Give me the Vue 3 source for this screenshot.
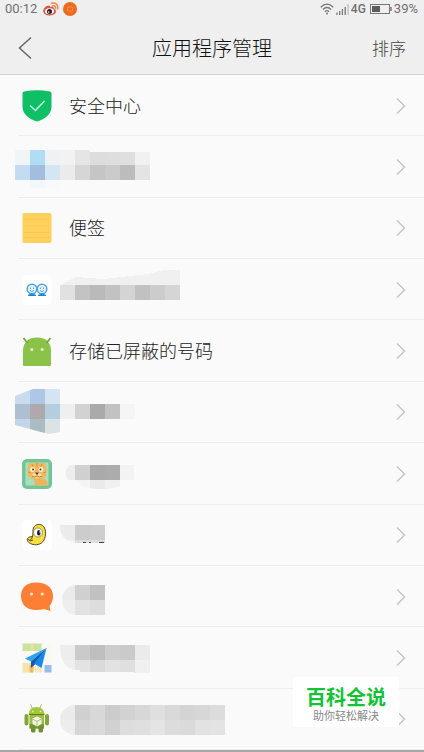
<script setup>
// Each mosaic strip is drawn in a 60px tall box whose vertical middle is y = 0.
// cells: [x, y, width, height, fill]
const band = (y, h, start, fills) => fills.map((fill, i) => [start + i * 15, y, 15, h, fill])

const apps = [
  { icon: 'shield', name: '安全中心' },
  {
    wide: true,
    cells: [
      ...band(-17, 15, 0, ['#f2f5f7', '#b1dcf5', '#eef2f4', '#f2f2f2', '#e5e5e5']),
      ...band(-15, 13, 75, ['#dddddd', '#dedede', '#dfdfdf', '#f1f1f1']),
      ...band(-2, 15, 0, ['#c3dcf1', '#a3bddc', '#d5e6f3', '#ebebeb', '#d6d6d6', '#c5c5c5', '#cbcbcb', '#bcbcbc', '#e4e4e4']),
      ...band(13, 8, 0, ['#f9fafa', '#f2f7fa', '#f8f9fa'])
    ]
  },
  { icon: 'note', name: '便签' },
  {
    icon: 'faces',
    shape: 'M0-5L16-13 43-11 70-14 88-16 104-20H120V-4H0z',
    shapeFill: '#f0f0f0',
    cells: band(-5, 15, 0, ['#e1e1e1', '#c3c3c3', '#bababa', '#c2c2c2', '#d4d4d4', '#c1c1c1', '#cccccc', '#d5d5d5'])
  },
  { icon: 'droid', name: '存储已屏蔽的号码' },
  {
    wide: true,
    clip: 'M0-16L18-23H46V-8H120V8H46V20L34 22 22 19 0 13z',
    cells: [
      ...band(-23, 15, 0, ['#c9dcee', '#aec7e7', '#d5e4f3']),
      ...band(-8, 15, 0, ['#aebfd4', '#b0a9ac', '#b4cedf', '#efefef', '#d2d2d2', '#aaaaaa', '#c2c2c2', '#f5f5f5']),
      ...band(7, 15, 0, ['#c2d5e9', '#abbcc2', '#dde3e4'])
    ]
  },
  {
    icon: 'tiger',
    clip: 'M10-9H74V7H60V12Q45 18 24 13L15 6H8Q2-3 10-9z',
    cells: [
      ...band(-9, 15, 0, ['#ededed', '#d0d0d0', '#aaaaaa', '#acacac', '#f3f3f3']),
      ...band(6, 9, 15, ['#f4f4f4', '#eaeaea', '#f0f0f0'])
    ]
  },
  {
    icon: 'chick',
    clip: 'M0-10H45V8H16Q0 6 0-10z',
    cells: [
      ...band(-10, 15, 0, ['#ebebeb', '#cccccc', '#cecece']),
      ...band(5, 3, 0, ['#f2f2f2', '#dddddd', '#dddddd'])
    ],
    marks: 'M23 7.500h3M29 8l2-1M39 7.500h5'
  },
  {
    icon: 'bubble',
    clip: 'M16-12H45V18H16A14 15 0 0 1 16-12z',
    cells: [
      ...band(-12, 15, 0, ['#ebebeb', '#d0d0d0', '#c1c1c1']),
      ...band(3, 15, 0, ['#eeeeee', '#e2e2e2', '#dddddd'])
    ]
  },
  {
    icon: 'map',
    clip: 'M0-13H90V15H74V14H20V12H15Q0 10 0-13z',
    cells: [
      ...band(-13, 15, 0, ['#ededed', '#cacaca', '#bfbfbf', '#cdcdcd', '#cacaca', '#ebebeb']),
      ...band(2, 13, 0, ['#efefef', '#e3e3e3', '#dadada', '#e2e2e2', '#dfdfdf', '#f0f0f0'])
    ]
  },
  {
    icon: 'robot',
    clip: 'M15-14H165V16H15A15 15 0 0 1 15-14z',
    cells: [
      ...band(-14, 15, 0, ['#ebebeb', '#d0d0d0', '#d8d8d8', '#cccccc', '#d2d2d2', '#d7d7d7', '#dfdfdf', '#d9d9d9', '#d4d4d4', '#d7d7d7', '#dcdcdc']),
      ...band(1, 15, 0, ['#ededed', '#d6d6d6', '#dadada', '#d1d1d1', '#dddddd', '#dfdfdf', '#e4e4e4', '#dcdcdc', '#dadada', '#e2e2e2', '#e3e3e3'])
    ]
  }
]
</script>

<template>
  <div class="page">
    <header class="top">
      <div class="status">
        <span class="clock">00:12</span>
        <svg class="weibo" viewBox="0 0 16 14" width="16" height="14" aria-hidden="true">
          <path d="M6 3.500C3 3.500 0 6.500 .3 9.500 .8 13 5 14 8.500 13.300 12 12.700 14 10 12.500 8 11.500 6.800 10.500 7 10.500 6 10.500 4 8 4.500 7 5 7 4.500 7 3.500 6 3.500z" fill="#e0564a" />
          <ellipse cx="6.500" cy="9.300" rx="4.500" ry="3" fill="#fff" />
          <circle cx="6.500" cy="9.500" r="2.500" fill="#222" />
          <circle cx="5.700" cy="10" r=".8" fill="#fff" />
          <path d="M8.500 1.200C12.500 0 15.800 3 14.500 7M9.800 3.800c2-.3 3 .7 2.600 2.400" fill="none" stroke="#ef8a4c" stroke-width="1.500" stroke-linecap="round" />
        </svg>
        <svg class="badge" viewBox="0 0 14 14" width="14" height="14" aria-hidden="true">
          <circle cx="7" cy="7" r="7" fill="#ee6a1e" />
          <path d="M4.500 5h5v4h-5z" fill="none" stroke="#f58a48" stroke-width="1" />
        </svg>
        <span class="spacer"></span>
        <svg class="wifi" viewBox="0 0 14 12" width="14" height="12" aria-hidden="true">
          <path d="M.7 4.200Q7-1.800 13.300 4.200M2.800 6.500Q7 2.500 11.200 6.500M4.800 8.700Q7 6.700 9.200 8.700" fill="none" stroke="#777" stroke-width="1.200" />
          <circle cx="7" cy="10.500" r="1" fill="#777" />
        </svg>
        <svg class="signal" viewBox="0 0 13 11" width="13" height="11" aria-hidden="true">
          <path d="M1 8.500V11M3.700 7V11M6.400 5V11M9.200 3V11" stroke="#777" stroke-width="1.300" />
          <path d="M12 0V11" stroke="#bbb" stroke-width="1.200" />
        </svg>
        <span class="net">4G</span>
        <svg class="battery" viewBox="0 0 22 10" width="22" height="10" aria-hidden="true">
          <rect x=".5" y=".5" width="19" height="9" fill="none" stroke="#777" />
          <rect x="2" y="2" width="8" height="6" fill="#5c5c5c" />
          <path d="M21 3V7" stroke="#777" stroke-width="1.500" />
        </svg>
        <span class="percent">39%</span>
      </div>
      <div class="bar">
        <button class="back" type="button" aria-label="返回">
          <svg viewBox="0 0 14 24" width="14" height="24"><path d="M13 1.500L1.500 12 13 22.500" fill="none" stroke="#666" stroke-width="1.500" /></svg>
        </button>
        <h1>应用程序管理</h1>
        <button class="sort" type="button">排序</button>
      </div>
    </header>

    <ul class="list">
      <li v-for="(app, i) in apps" :key="i">
        <a href="#" class="row" :class="{ wide: app.wide }" :aria-label="app.name || '应用'">
          <svg v-if="app.icon" class="icon" viewBox="0 0 34 34" width="34" height="34" aria-hidden="true">
            <template v-if="app.icon === 'shield'">
              <path d="M2.500 4.500Q2.500 3 4 2.500 17-.2 30 2.500 31.500 3 31.500 4.500V18C31.500 25 25 30 17 32.500 9 30 2.500 25 2.500 18z" fill="#0fbf66" />
              <path d="M10 16.500l5.500 5L24.500 12" fill="none" stroke="#c8f5dc" stroke-width="1.500" />
            </template>
            <template v-else-if="app.icon === 'note'">
              <rect x="2.500" y="2" width="29" height="30" rx="1.500" fill="#fdd15c" />
              <path d="M4 8h25M4 15h25M4 21.500h25M4 26.500h25" stroke="#f6c552" stroke-width="1" />
            </template>
            <template v-else-if="app.icon === 'faces'">
              <rect x="2" y="2" width="30" height="30" rx="5" fill="#fff" />
              <g fill="#e2f4ff" stroke="#4da3df" stroke-width="1.500">
                <circle cx="12" cy="16" r="4.800" /><circle cx="22" cy="16" r="4.800" />
              </g>
              <path d="M8 22.500q4-3 8 0zM18 22.500q4-3 8 0z" fill="#1f83d8" stroke="#1f83d8" />
              <path d="M10.500 14.500v1.500M13.500 14.500v1.500M20.500 14.500v1.500M23.500 14.500v1.500M10 17.500q2 2 4 0M20 17.500q2 2 4 0" fill="none" stroke="#4399d8" stroke-width=".9" />
            </template>
            <template v-else-if="app.icon === 'droid'">
              <path d="M3 31V16.500C3 8 9 3.500 17 3.500S31 8 31 16.500V31Q31 32 30 32H4Q3 32 3 31z" fill="#8bc34a" />
              <path d="M3.500 4l4 5M30.500 4l-4 5" stroke="#73a545" stroke-width="1.800" />
              <circle cx="11.800" cy="15.500" r="1.500" fill="#e4f6cb" /><circle cx="22.200" cy="15.500" r="1.500" fill="#e4f6cb" />
            </template>
            <template v-else-if="app.icon === 'tiger'">
              <rect x="2" y="2" width="30" height="30" rx="5" fill="#72c695" />
              <rect x="5.500" y="5.500" width="23" height="23" rx="1" fill="#a8dfbf" />
              <path d="M14 22h11l2.500 3v3.500H15z" fill="#efb35d" />
              <path d="M8 9q0-4 4-2.500 5-1.500 9.500 0Q26 5 26 9q1 4 0 7 1 3-2 5-7 3-14 0-3-2-2-5-1-4 0-7z" fill="#f3b75e" />
              <path d="M12 7l1 2.500M17 6v3M22 7l-1 2.500M8 15l3 1M26 15l-3 1" stroke="#d68f42" stroke-width="1" />
              <circle cx="12.500" cy="12.500" r="2.400" fill="#fff6dd" /><circle cx="21" cy="12.500" r="2.400" fill="#fff6dd" />
              <circle cx="13" cy="12.500" r="1" fill="#4e3526" /><circle cx="20.500" cy="12.500" r="1" fill="#4e3526" />
              <ellipse cx="17" cy="18.500" rx="5" ry="2.500" fill="#fbe0a3" />
              <path d="M15 15.500h4l-2 3z" fill="#80432a" /><path d="M17 19q-3 2-5 0M17 19q3 2 5 0" fill="none" stroke="#b9783a" />
            </template>
            <template v-else-if="app.icon === 'chick'">
              <rect x="2" y="2" width="30" height="30" rx="4" fill="#fff" />
              <path d="M13.500 10C15 6 20.500 5 23.500 8.500 26.500 12 26 18 24 22 21.500 27 15.500 27.500 11.500 26 8.500 25 6.500 22.500 7.500 20.500 8.500 18.500 10.500 19 12.500 18.500 13.500 15 12.300 13 13.500 10z" fill="#f5de42" stroke="#3c3820" stroke-width=".9" />
              <path d="M8 21q2 3.500 5 1M12.500 18.500q-.5 3-3 4" fill="none" stroke="#4c4216" stroke-width=".9" />
              <circle cx="18" cy="14.500" r="4.500" fill="#fff" stroke="#777346" stroke-width=".7" />
              <ellipse cx="18.800" cy="14.700" rx="1.800" ry="2.800" fill="#1c1c1c" /><circle cx="20" cy="14" r=".8" fill="#fff" />
            </template>
            <template v-else-if="app.icon === 'bubble'">
              <path d="M16 2.500C27 2.500 33 8 33 16Q33 22 29.500 26L30.500 31 24 29Q21 30 16 30C6 30 1 24 1 16S6 2.500 16 2.500z" fill="#fd7f35" />
              <circle cx="11.500" cy="14" r="1.600" fill="#ffe3d0" /><circle cx="22.200" cy="14" r="1.600" fill="#ffe3d0" />
            </template>
            <template v-else-if="app.icon === 'map'">
              <rect x="2.500" y="2.500" width="29" height="29" fill="#f8f7f2" />
              <path d="M2.500 2.500H21.500V10H2.500z" fill="#cbe3a1" />
              <path d="M11 2.500H14V10H11z" fill="#e8dfa1" />
              <path d="M2.500 22H13V31.500H2.500z" fill="#f7e3ac" /><path d="M9.500 24H13.500V31.500H9.500z" fill="#f3b85e" />
              <path d="M15 25H22V31.500H15z" fill="#f5e8c2" /><path d="M24.500 24H31.500V31.500H24.500z" fill="#96bdec" />
              <path d="M26.500 7L5 17.500 11 20.500z" fill="#2aa2f5" />
              <path d="M26.500 7L11 20.500V27L15.500 23z" fill="#1559a8" />
              <path d="M26.500 7L14 22.500 21.500 27z" fill="#1689ed" />
            </template>
            <template v-else>
              <path d="M10.500 2.500l2 4M21.500 2.500l-2 4" stroke="#a3b977" stroke-width="1" />
              <path d="M8.500 12.500Q9 5 16.500 5T24.500 12.500z" fill="#a4c83c" />
              <rect x="4.500" y="12" width="4" height="11.500" rx="2" fill="#83a63b" />
              <rect x="25" y="12" width="4" height="11.500" rx="2" fill="#83a63b" />
              <path d="M9.500 13H24V26.500H9.500z" fill="#9abf3a" /><path d="M9.500 22H24V26.500H9.500z" fill="#77992f" />
              <rect x="11" y="24" width="4.500" height="6.500" rx="1.500" fill="#718e35" />
              <rect x="18.500" y="24" width="4.500" height="6.500" rx="1.500" fill="#718e35" />
              <path d="M9 12.500H24.500" stroke="#5c7926" stroke-width="1" />
              <circle cx="13" cy="9.500" r=".8" fill="#eef6d5" /><circle cx="20.500" cy="9.500" r=".8" fill="#eef6d5" />
              <path d="M17 14.500l4.500 2V22L17 24.500 12.500 22V16.500z" fill="#f3f7ec" />
              <path d="M12.500 17L17 19.500 21.500 17M17 19.500V24" fill="none" stroke="#9db46c" stroke-width=".9" />
            </template>
          </svg>
          <span v-if="app.name" class="name">{{ app.name }}</span>
          <svg v-else class="mosaic" viewBox="0 -30 165 60" width="165" height="60" shape-rendering="crispEdges" aria-hidden="true">
            <clipPath v-if="app.clip" :id="'edge' + i"><path :d="app.clip" /></clipPath>
            <path v-if="app.shape" :d="app.shape" :fill="app.shapeFill" />
            <g :clip-path="app.clip ? `url(#edge${i})` : null">
              <rect v-for="(c, n) in app.cells" :key="n" :x="c[0]" :y="c[1]" :width="c[2]" :height="c[3]" :fill="c[4]" />
            </g>
            <path v-if="app.marks" :d="app.marks" stroke="#444" stroke-width="1" fill="none" />
          </svg>
          <svg class="chevron" viewBox="0 0 10 18" width="10" height="18" aria-hidden="true">
            <path d="M1 1.500L8.500 9 1 16.500" fill="none" stroke="#c6c6c6" stroke-width="1.500" />
          </svg>
        </a>
      </li>
    </ul>

    <aside class="stamp">
      <strong>百科全说</strong>
      <span>助你轻松解决</span>
    </aside>
  </div>
</template>

<style>
body {
  margin: 0;
  background: #fafafa;
}
</style>

<style scoped>
.page {
  position: relative;
  box-sizing: border-box;
  min-height: 100vh;
  display: flex;
  flex-direction: column;
  background: #fafafa;
  border-bottom: 2px solid #a6a6a6;
  color: #333;
  font-family: Roboto, "Noto Sans CJK SC", sans-serif;
}
.top {
  background: #efefef;
  border-bottom: 1px solid #d2d2d2;
}
.status {
  display: flex;
  align-items: center;
  height: 18px;
  padding: 0 6px 0 5px;
  font-size: 13px;
  line-height: 18px;
  color: #707070;
}
.weibo {
  margin-left: 6px;
}
.badge {
  margin-left: 4px;
}
.spacer {
  flex: 1;
}
.signal {
  margin-left: 2px;
}
.net {
  margin-left: 2px;
  font-size: 12px;
  font-weight: 500;
}
.battery {
  margin: 0 2px 0 4px;
}
.bar {
  display: grid;
  grid-template-columns: 1fr auto 1fr;
  align-items: center;
  height: 56px;
  padding: 0 18px;
}
button {
  border: 0;
  padding: 0;
  background: none;
  font-family: inherit;
}
.back {
  display: flex;
  justify-self: start;
  padding: 4px 0 0;
}
.back svg {
  display: block;
}
h1 {
  margin: 0;
  padding-top: 6px;
  font-size: 20px;
  font-weight: 300;
  line-height: 28px;
  color: #111;
}
.sort {
  justify-self: end;
  padding-top: 6px;
  font-size: 17px;
  font-weight: 300;
  line-height: 24px;
  color: #444;
}
.list {
  flex: 1;
  display: grid;
  grid-auto-rows: 1fr;
  margin: 0;
  padding: 0;
  list-style: none;
}
li {
  display: flex;
  background: linear-gradient(#ededed, #ededed) right bottom / calc(100% - 18px) 1px no-repeat;
}
.row {
  flex: 1;
  display: flex;
  align-items: center;
  padding: 0 18px 0 20px;
  color: inherit;
  text-decoration: none;
}
.row.wide {
  padding-left: 15px;
}
.icon {
  flex: none;
}
.name {
  margin-left: 15px;
  padding-top: 2px;
  font-size: 18px;
  font-weight: 300;
  line-height: 26px;
  color: #222;
}
.mosaic {
  flex: none;
}
.icon + .mosaic {
  margin-left: 6px;
}
.chevron {
  flex: none;
  margin-left: auto;
}
.stamp {
  position: absolute;
  right: 25px;
  bottom: 23px;
  display: flex;
  flex-direction: column;
  align-items: center;
  padding: 9px 13px 3px;
  background: #fff;
}
.stamp strong {
  font-size: 20px;
  line-height: 24px;
  font-weight: 700;
  color: #14c236;
}
.stamp span {
  font-size: 11px;
  line-height: 14px;
  color: #888;
}
</style>
